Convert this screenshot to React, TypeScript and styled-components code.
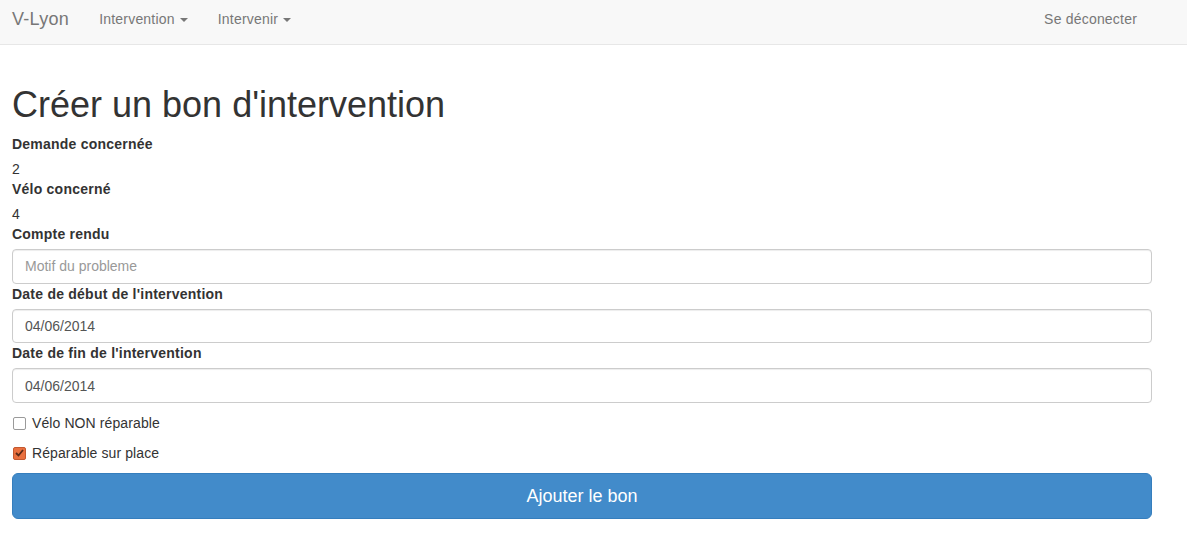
import React from "react";
import styled, { createGlobalStyle } from "styled-components";

const Global = createGlobalStyle`
  html, body { margin: 0; padding: 0; background: #fff; }
  body {
    font-family: "Liberation Sans", Arial, Helvetica, sans-serif;
    font-size: 14px;
    line-height: 1.428571429;
    color: #333;
  }
  * { box-sizing: border-box; }
`;

const Navbar = styled.nav`
  height: 45px;
  background: #f8f8f8;
  border-bottom: 1px solid #e7e7e7;
  display: flex;
  align-items: flex-start;
  padding: 0 35px 0 12px;
`;

const Brand = styled.a`
  font-size: 18px;
  line-height: 20px;
  letter-spacing: 0.3px;
  padding: 9px 15px 0 0;
  color: #777;
  text-decoration: none;
`;

const NavList = styled.ul`
  list-style: none;
  margin: 0;
  padding: 0;
  display: flex;
`;

const RightNav = styled(NavList)`
  margin-left: auto;
`;

const NavLink = styled.a`
  display: flex;
  align-items: center;
  font-size: 14px;
  line-height: 20px;
  letter-spacing: 0.2px;
  padding: 9px 15px 0;
  color: #777;
  text-decoration: none;
`;

const Caret = styled.span`
  display: inline-block;
  width: 0;
  height: 0;
  margin-left: 5px;
  margin-top: 1px;
  border-top: 4px solid #777;
  border-left: 4px solid transparent;
  border-right: 4px solid transparent;
`;

const Container = styled.main`
  width: 1164px;
  padding: 0 12px;
`;

const Title = styled.h1`
  font-size: 36px;
  font-weight: 500;
  line-height: 39.6px;
  margin: 39.5px 0 10px;
  color: #333;
`;

const Label = styled.label`
  display: block;
  font-weight: bold;
  line-height: 20px;
  letter-spacing: 0.23px;
  margin-bottom: 5px;
`;

const Value = styled.div`
  line-height: 20px;
`;

const Input = styled.input`
  display: block;
  width: 100%;
  height: 34.6px;
  padding: 6px 12px;
  font-family: inherit;
  font-size: 14px;
  line-height: 20px;
  color: #555;
  background: #fff;
  border: 1px solid #ccc;
  border-radius: 4px;
  box-shadow: inset 0 1px 1px rgba(0, 0, 0, 0.075);
  outline: none;
  &::placeholder { color: #999; }
`;

const CheckRow = styled.label`
  display: flex;
  align-items: flex-start;
  margin: 10px 0;
  min-height: 20px;
  line-height: 20px;
  letter-spacing: 0.1px;
  cursor: pointer;
`;

const Box = styled.span<{ $checked?: boolean }>`
  flex: none;
  width: 13px;
  height: 13px;
  margin: 4px 6px 0 1px;
  border-radius: 2px;
  border: 1px solid ${(p) => (p.$checked ? "#c4582f" : "#9a9a9a")};
  background: ${(p) => (p.$checked ? "#e9703f" : "#fff")};
  display: flex;
  align-items: center;
  justify-content: center;
`;

const SubmitButton = styled.button`
  display: block;
  width: 100%;
  height: 46px;
  padding: 10px 16px;
  font-family: inherit;
  font-size: 18px;
  line-height: 24px;
  color: #fff;
  background: #428bca;
  border: 1px solid #357ebd;
  border-radius: 6px;
  cursor: pointer;
`;

function Check({ checked, children }: { checked?: boolean; children: React.ReactNode }) {
  return (
    <CheckRow>
      <Box $checked={checked}>
        {checked && (
          <svg width="9" height="8" viewBox="0 0 9 8">
            <path d="M1 4 L3.5 6.5 L8 1" fill="none" stroke="#5a2a18" strokeWidth="1.8" />
          </svg>
        )}
      </Box>
      {children}
    </CheckRow>
  );
}

export default function App() {
  return (
    <>
      <Global />
      <Navbar>
        <Brand href="#">V-Lyon</Brand>
        <NavList>
          <li>
            <NavLink href="#">
              Intervention <Caret />
            </NavLink>
          </li>
          <li>
            <NavLink href="#">
              Intervenir <Caret />
            </NavLink>
          </li>
        </NavList>
        <RightNav>
          <li>
            <NavLink href="#">Se déconecter</NavLink>
          </li>
        </RightNav>
      </Navbar>
      <Container>
        <Title>Créer un bon d'intervention</Title>
        <Label>Demande concernée</Label>
        <Value>2</Value>
        <Label>Vélo concerné</Label>
        <Value>4</Value>
        <Label>Compte rendu</Label>
        <Input placeholder="Motif du probleme" />
        <Label>Date de début de l'intervention</Label>
        <Input defaultValue="04/06/2014" />
        <Label>Date de fin de l'intervention</Label>
        <Input defaultValue="04/06/2014" />
        <Check>Vélo NON réparable</Check>
        <Check checked>Réparable sur place</Check>
        <SubmitButton>Ajouter le bon</SubmitButton>
      </Container>
    </>
  );
}
